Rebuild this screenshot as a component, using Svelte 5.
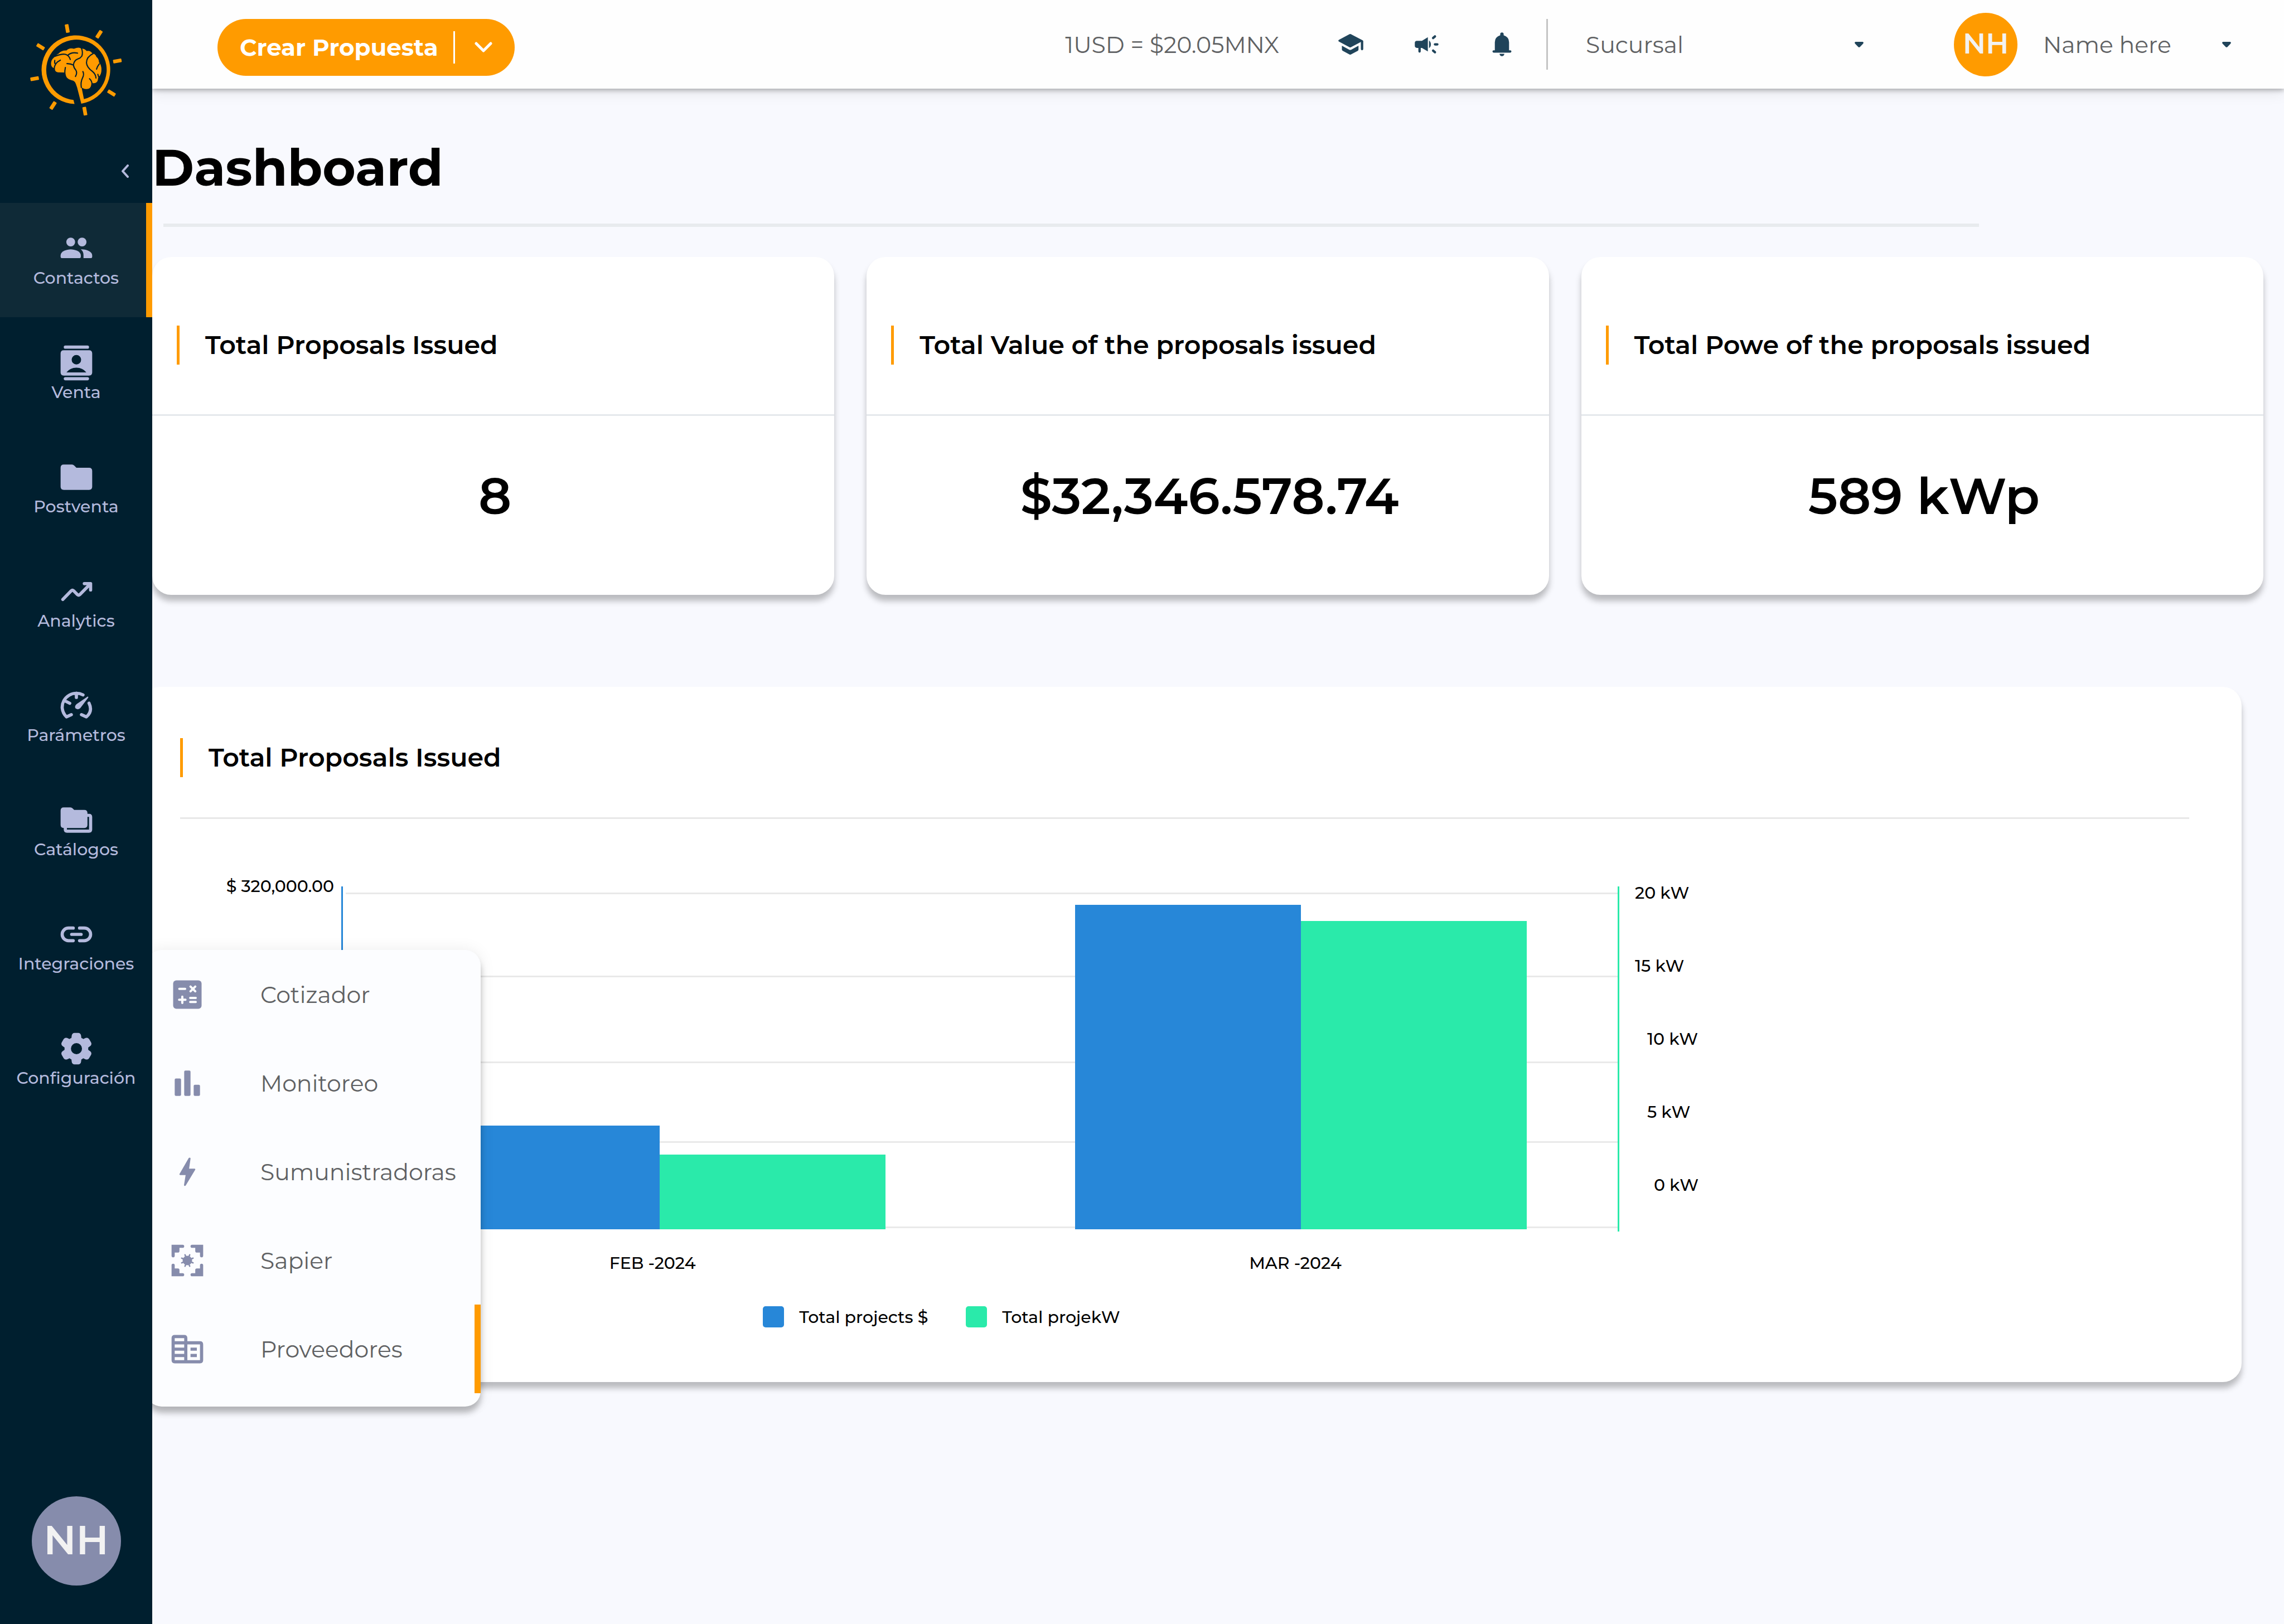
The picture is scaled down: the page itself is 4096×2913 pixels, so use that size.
<script>
  const navItems = [
    { label: "Contactos", icon: "group", active: true },
    { label: "Venta", icon: "contacts" },
    { label: "Postventa", icon: "folder" },
    { label: "Analytics", icon: "trend" },
    { label: "Parámetros", icon: "speed" },
    { label: "Catálogos", icon: "folders" },
    { label: "Integraciones", icon: "link" },
    { label: "Configuración", icon: "settings" },
  ];

  const submenu = [
    { label: "Cotizador", icon: "calculator" },
    { label: "Monitoreo", icon: "bars" },
    { label: "Sumunistradoras", icon: "bolt" },
    { label: "Sapier", icon: "focus" },
    { label: "Proveedores", icon: "building", active: true },
  ];

  const stats = [
    { title: "Total Proposals Issued", value: "8" },
    { title: "Total Value of the proposals issued", value: "$32,346.578.74" },
    { title: "Total Powe of the proposals issued", value: "589 kWp" },
  ];

  // plot geometry, in viewBox units
  const baseline = 615;
  const gridLines = [11, 160, 314, 457, 610];
  const bars = [
    { x: 166, height: 186, series: "money" },
    { x: 571, height: 134, series: "power" },
    { x: 1316, height: 582, series: "money" },
    { x: 1721, height: 553, series: "power" },
  ];
  const powerTicks = [
    { label: "20 kW", level: 0 },
    { label: "15 kW", level: 0 },
    { label: "10 kW", level: 1 },
    { label: "5 kW", level: 1 },
    { label: "0 kW", level: 2 },
  ];

  const rays = [
    [510, 216, -10],
    [750, 260, 33],
    [888, 461, 80],
    [844, 703, -58],
    [643, 840, -10],
    [403, 797, 33],
    [264, 595, 80],
    [309, 354, -58],
  ];

  let branch = "Sucursal";
</script>

{#snippet icon(name)}
  <svg class="icon" viewBox="0 0 24 24" aria-hidden="true">
    {#if name === "group"}
      <circle cx="8.4" cy="7.8" r="2.8" />
      <circle cx="15.6" cy="7.8" r="2.8" />
      <path d="M2 16.2C2 13.6 6 12.4 8.4 12.4S14.8 13.6 14.8 16.2V17.2q0 .8-.8.8H2.8Q2 18 2 17.2Z" />
      <path d="M14.8 12.45C18 12.2 22 13.7 22 16.2V17.2q0 .8-.8.8H16.5V16C16.5 14.5 15.9 13.3 14.8 12.45Z" />
    {:else if name === "contacts"}
      <rect x="4" y="1" width="16" height="2" rx="1" />
      <rect x="4" y="21" width="16" height="2" rx="1" />
      <path
        fill-rule="evenodd"
        d="M4 4H20q2 0 2 2V18q0 2-2 2H4q-2 0-2-2V6q0-2 2-2ZM12 7a3 3 0 0 0 0 6 3 3 0 0 0 0-6ZM5.7 18H18.3Q16 15 12 15T5.7 18Z"
      />
    {:else if name === "folder"}
      <path d="M4 20q-2 0-2-2V6q0-2 2-2h5.2q.8 0 1.4.6L12 6h8q2 0 2 2v10q0 2-2 2z" />
    {:else if name === "trend"}
      <path class="line" d="M3.4 17L8.8 11.5q.7-.6 1.4 0L12.7 14q.7.6 1.4 0L20.6 7.4M17 7H21V11" />
    {:else if name === "speed"}
      <path class="line" d="M16.2 5.1A9 9 0 0 0 3 13Q3.2 16.5 5.7 19L8.8 17.6M20 10.3Q22.5 15.5 18.3 19L15.2 17.6M12 4V6.7M5 9L7.8 10.4" />
      <path d="M19.2 6.1q.6.4.2.9L14.6 13.3q-1.3 1.5-3.1.4-1-1.5.6-2.8z" />
    {:else if name === "folders"}
      <path d="M4 17q-2 0-2-2V6q0-2 2-2h4.2q.8 0 1.4.6l1 1H17q2 0 2 2V15q0 2-2 2z" />
      <path d="M4 16V18q0 2 2 2H20q2 0 2-2V10q0-2-2-2H18V10h2v8H6V16z" />
    {:else if name === "link"}
      <path class="line" d="M10 8H7a4 4 0 0 0 0 8h3M14 8h3a4 4 0 0 1 0 8h-3M9 12h6" />
    {:else if name === "settings"}
      <path
        d="M10.825 22q-.675 0-1.162-.45t-.588-1.1L8.85 18.8q-.325-.125-.612-.3t-.563-.375l-1.55.65q-.625.275-1.25.05t-.975-.8l-1.175-2.05q-.35-.575-.2-1.225t.675-1.075l1.325-1Q4.5 12.5 4.5 12.337v-.675q0-.162.025-.337l-1.325-1Q2.675 9.9 2.525 9.25t.2-1.225L3.9 5.975q.35-.575.975-.8t1.25.05l1.55.65q.275-.2.575-.375t.6-.3l.225-1.65q.1-.65.588-1.1T10.825 2h2.35q.675 0 1.163.45t.587 1.1l.225 1.65q.325.125.613.3t.562.375l1.55-.65q.625-.275 1.25-.05t.975.8l1.175 2.05q.35.575.2 1.225t-.675 1.075l-1.325 1q.025.175.025.338v.674q0 .163-.05.338l1.325 1q.525.425.675 1.075t-.2 1.225l-1.2 2.05q-.35.575-.975.8t-1.25-.05l-1.5-.65q-.275.2-.575.375t-.6.3l-.225 1.65q-.1.65-.587 1.1t-1.163.45zm1.225-6.5q1.45 0 2.475-1.025T15.55 12t-1.025-2.475T12.05 8.5q-1.475 0-2.488 1.025T8.55 12t1.013 2.475T12.05 15.5"
      />
    {:else if name === "calculator"}
      <rect x="3" y="3" width="18" height="18" rx="2" />
      <path class="cut" d="M6.9 8.4H10.6M14 6.9L17 9.9M17 6.9L14 9.9M8.8 13.3V17.3M6.8 15.3H10.8M13.8 14.1H17.3M13.8 16.7H17.3" />
    {:else if name === "bars"}
      <rect x="4" y="9" width="4" height="11" rx="0.8" />
      <rect x="10" y="4" width="4" height="16" rx="0.8" />
      <rect x="16" y="13" width="4" height="7" rx="0.8" />
    {:else if name === "bolt"}
      <path d="M12.9 3.2q.4-.4.9-.1.3.2.2.6L13.1 10H16.5q.9.2.3.9L11 20.6q-.4.5-.9.2-.3-.2-.2-.6L10.9 14H7.5q-.9-.2-.3-.9z" />
    {:else if name === "focus"}
      {#each [0, 90, 180, 270] as angle}
        <path transform="rotate({angle} 12 12)" d="M2 2H9a1 1 0 0 1 0 2H7V6a1 1 0 0 1-1 1H4V9a1 1 0 0 1-2 0Z" />
      {/each}
      <circle cx="12" cy="12" r="3" />
      {#each [22.5, 67.5, 112.5, 157.5] as angle}
        <path class="spoke" transform="rotate({angle} 12 12)" d="M12 8.1V15.9" />
      {/each}
    {:else if name === "building"}
      <path
        fill-rule="evenodd"
        d="M4 3h6q2 0 2 2v2h8q2 0 2 2v10q0 2-2 2H4q-2 0-2-2V5q0-2 2-2zM4 5v2h6V5zM4 9v2h6V9zM4 13v2h6v-2zM4 17v2h6v-2zM12 9v10h8V9zM14 11h4v2h-4zM14 15h4v2h-4z"
      />
    {/if}
  </svg>
{/snippet}

{#snippet caret()}
  <svg class="caret" viewBox="0 0 16 10" aria-hidden="true">
    <path d="M1.500 0h13q2.500 1 .5 3.500L9.500 9.200q-1.500 1.300-3 0L1 3.500Q-1 1 1.500 0z" />
  </svg>
{/snippet}

<div class="shell">
  <aside>
    <div class="brand">
      <svg class="logo" viewBox="230 182 694 694" role="img" aria-label="Logo">
        {#each rays as [x, y, angle]}
          <rect x={x - 14} y={y - 32} width="28" height="64" rx="5" transform="rotate({angle} {x} {y})" />
        {/each}
        <path d="M565 786A259 259 0 1 1 616 783L583 655L570 620L600 600L614 640L636 749A228 228 0 1 0 557 755Z" />
        <path
          d="M424 421Q435 410 446 405Q465 380 505 382Q525 360 560 369Q600 353 616 368Q640 366 657 386Q682 380 699 403Q722 408 730 430Q750 445 749 470Q770 495 768 530Q768 560 750 580Q742 585 741 605Q735 632 702 629Q690 628 691 640Q688 672 655 673Q625 672 616 655L583 655Q575 610 540 606Q505 598 498 565Q496 548 484 548L440 547Q416 545 417 520L408 514Q386 505 388 475Q390 445 424 425Z"
        />
        <path
          class="groove"
          d="M420 425Q470 405 497 411Q525 420 533 450M518 415Q545 392 588 402M618 366Q630 400 620 425Q610 440 590 446Q560 458 557 490M508 481Q535 480 557 492Q560 515 575 530Q588 550 572 578M496 510Q490 535 492 565M458 455Q415 475 412 518M416 457Q413 470 418 482M706 405Q655 430 655 475Q658 510 700 540Q725 560 727 590M752 483Q735 505 731 523M741 562Q743 575 752 587M628 541Q640 560 625 590Q610 620 616 660M678 595Q695 610 697 634"
        />
      </svg>
      <button class="collapse" aria-label="Collapse menu">
        <svg viewBox="0 0 14 24" aria-hidden="true"><path d="M12 2L3 12L12 22" /></svg>
      </button>
    </div>

    <nav>
      {#each navItems as item}
        <a href="#{item.icon}" class:active={item.active}>
          {@render icon(item.icon)}
          <span>{item.label}</span>
        </a>
      {/each}
    </nav>

    <div class="avatar big">NH</div>
  </aside>

  <div class="submenu">
    {#each submenu as item}
      <a href="#{item.icon}" class:active={item.active}>
        {@render icon(item.icon)}
        <span>{item.label}</span>
      </a>
    {/each}
  </div>

  <div class="page">
    <header>
      <button class="create">
        <span>Crear Propuesta</span>
        <i></i>
        <svg viewBox="0 0 32 20" aria-hidden="true"><path d="M3 3L16 16L29 3" /></svg>
      </button>

      <span class="rate">1USD = $20.05MNX</span>

      <div class="tools">
        <button aria-label="Courses">
          <svg viewBox="93 168 216 216" aria-hidden="true">
            <path d="M187 198.500Q192 196 197 198.500L286 245Q291 248 291 252V312Q291 321 282 321T273 312V258L197 298.500Q192 301 187 298.500L106 255Q98 248.500 106 242Z" />
            <path d="M129 287L183 316Q192 321 201 316L255 287V316Q255 322 249 326L197 353Q192 356 187 353L136 326Q129 322 129 316Z" />
          </svg>
        </button>
        <button aria-label="News">
          <svg viewBox="660 168 216 216" aria-hidden="true">
            <path d="M694 249H732L777 222V330L732 303H723V330a9 9 0 0 1-18 0V303H694Q678 303 678 287V265Q678 249 694 249Z" />
            <path d="M786 246Q800 258 800 276T786 306Z" />
            <path class="burst" d="M831 276H849M817 228L831 216M817 324L831 336" />
          </svg>
        </button>
        <button aria-label="Notifications">
          <svg viewBox="1236 168 216 216" aria-hidden="true">
            <path d="M1331 207V199a13 13 0 0 1 26 0v8Q1398 220 1398 260V321H1407a9 9 0 0 1 0 18H1281a9 9 0 0 1 0-18H1290V260Q1290 220 1331 207Z" />
            <path d="M1326 348h36a18 18 0 0 1-36 0Z" />
          </svg>
        </button>
      </div>

      <div class="branch">
        <select aria-label="Sucursal" bind:value={branch}>
          <option>Sucursal</option>
        </select>
        {@render caret()}
      </div>

      <div class="avatar">NH</div>
      <button class="user">
        <span>Name here</span>
        {@render caret()}
      </button>
    </header>

    <main>
      <h1>Dashboard</h1>
      <hr />

      <div class="stats">
        {#each stats as stat}
          <section class="card">
            <h2>{stat.title}</h2>
            <p>{stat.value}</p>
          </section>
        {/each}
      </div>

      <section class="card chart">
        <h2>Total Proposals Issued</h2>
        <div class="plot">
          <span class="money-tick">$ 320,000.00</span>
          <svg viewBox="0 0 2292 619" preserveAspectRatio="none" role="img" aria-label="Projects per month">
            {#each gridLines as y}
              <rect class="grid-line" x="8" {y} width="2281" height="3" />
            {/each}
            {#each bars as bar}
              <rect class={bar.series} x={bar.x} y={baseline - bar.height} width="405" height={bar.height} />
            {/each}
            <rect class="money" x="0" y="0" width="3" height="619" />
            <rect class="power" x="2289" y="0" width="3" height="619" />
          </svg>
          <ul class="power-ticks">
            {#each powerTicks as tick}
              <li class="level-{tick.level}">{tick.label}</li>
            {/each}
          </ul>
          <div class="months">
            <span>FEB -2024</span>
            <span>MAR -2024</span>
          </div>
          <div class="legend">
            <span><i class="money"></i>Total projects $</span>
            <span><i class="power"></i>Total projekW</span>
          </div>
        </div>
      </section>
    </main>
  </div>
</div>

<style>
  :global(body) {
    margin: 0;
    background: #f8f9fe;
  }

  .shell {
    --orange: #ff9b00;
    --navy: #001f2f;
    --blue: #2787d8;
    --green: #2aeaaa;
    position: relative;
    display: flex;
    min-height: 100vh;
    font-family: "Montserrat", "Inter", sans-serif;
    color: #000;
  }

  button,
  select {
    padding: 0;
    border: 0;
    background: none;
    font: inherit;
    color: inherit;
    cursor: pointer;
  }

  a {
    color: inherit;
    text-decoration: none;
  }

  svg {
    display: block;
    fill: currentColor;
  }

  .icon {
    width: 68px;
    height: 68px;
    flex: none;
  }

  .line {
    fill: none;
    stroke: currentColor;
    stroke-width: 2;
    stroke-linecap: round;
    stroke-linejoin: round;
  }

  .cut {
    fill: none;
    stroke: #fcfdff;
    stroke-width: 1.4;
    stroke-linecap: round;
  }

  .spoke {
    stroke: currentColor;
    stroke-width: 0.9;
    stroke-linecap: round;
  }

  /* sidebar */
  aside {
    position: relative;
    z-index: 3;
    display: flex;
    flex-direction: column;
    align-items: center;
    flex: none;
    width: 273px;
    box-sizing: border-box;
    padding-bottom: 69px;
    background: var(--navy);
    color: #b4badd;
  }

  .brand {
    display: flex;
    flex-direction: column;
    align-items: center;
    justify-content: space-between;
    width: 100%;
    height: 364px;
    box-sizing: border-box;
    padding: 43px 0 45px;
  }

  .logo {
    width: 165px;
    height: 165px;
    color: var(--orange);
  }

  .groove {
    fill: none;
    stroke: var(--navy);
    stroke-width: 9;
    stroke-linecap: round;
  }

  .collapse {
    align-self: flex-end;
    margin-right: 42px;
  }

  .collapse svg {
    width: 14px;
    height: 24px;
    fill: none;
    stroke: currentColor;
    stroke-width: 4;
    stroke-linecap: round;
    stroke-linejoin: round;
  }

  nav {
    width: 100%;
    margin-bottom: auto;
  }

  nav a {
    display: flex;
    flex-direction: column;
    align-items: center;
    height: 205px;
    box-sizing: border-box;
    padding-top: 48px;
    font-size: 30px;
    font-weight: 500;
    line-height: 37px;
  }

  nav a.active {
    background: linear-gradient(to left, var(--orange) 11px, #0f2a37 11px);
  }

  .avatar {
    display: flex;
    align-items: center;
    justify-content: center;
    flex: none;
    width: 114px;
    height: 114px;
    box-sizing: border-box;
    padding-bottom: 4px;
    border-radius: 50%;
    background: var(--orange);
    color: #f2f2f2;
    font-size: 51px;
    font-weight: 600;
  }

  .avatar.big {
    width: 160px;
    height: 160px;
    background: #868cac;
    font-size: 72px;
  }

  /* floating submenu */
  .submenu {
    position: absolute;
    top: 1704px;
    left: 262px;
    z-index: 2;
    width: 600px;
    box-sizing: border-box;
    padding-bottom: 24px;
    border-radius: 28px;
    background: #fcfdff;
    box-shadow:
      0 11px 11px rgba(0, 0, 0, 0.25),
      0 0 28px rgba(0, 0, 0, 0.08);
    color: #868cac;
  }

  .submenu a {
    display: flex;
    align-items: center;
    gap: 97px;
    height: 159px;
    padding-left: 40px;
  }

  .submenu a.active {
    background: linear-gradient(to left, var(--orange) 11px, transparent 11px);
  }

  .submenu span {
    color: #5f6163;
    font-size: 41px;
  }

  /* top bar */
  .page {
    flex: 1;
    min-width: 0;
  }

  header {
    position: relative;
    z-index: 1;
    display: flex;
    align-items: center;
    height: 159px;
    box-sizing: border-box;
    padding: 0 95px 0 117px;
    background: #fefefe;
    box-shadow:
      0 3px 8px rgba(0, 0, 0, 0.28),
      0 8px 24px rgba(0, 0, 0, 0.08);
    color: #5f6163;
    font-size: 41px;
  }

  header svg {
    color: #20445a;
  }

  .create {
    display: flex;
    align-items: center;
    gap: 27px;
    height: 102px;
    box-sizing: border-box;
    margin: 11px auto 0 0;
    padding: 0 40px;
    border-radius: 51px;
    background: var(--orange);
    color: #fff;
    font-size: 42px;
    font-weight: 700;
  }

  .create i {
    width: 3px;
    height: 58px;
    background: #fff;
  }

  .create svg {
    width: 32px;
    height: 20px;
    margin-left: 8px;
    fill: none;
    stroke: #fff;
    stroke-width: 5;
    stroke-linecap: round;
    stroke-linejoin: round;
  }

  .tools {
    display: flex;
    gap: 84px;
    margin: 0 54px 0 104px;
  }

  .tools svg {
    width: 51px;
    height: 51px;
  }

  .burst {
    stroke: currentColor;
    stroke-width: 18;
    stroke-linecap: round;
  }

  .branch {
    display: flex;
    align-items: center;
    width: 569px;
    height: 91px;
    box-sizing: border-box;
    margin-right: 162px;
    padding-left: 68px;
    border-left: 3px solid #c4c4c4;
  }

  .branch select {
    flex: 1;
    appearance: none;
    outline: none;
  }

  .caret {
    width: 16px;
    height: 10px;
    flex: none;
    pointer-events: none;
  }

  .user {
    display: flex;
    align-items: center;
    justify-content: space-between;
    width: 337px;
    margin-left: 46px;
  }

  /* content */
  main {
    padding: 86px 37px 0 0;
  }

  h1 {
    margin: 0;
    font-size: 91px;
    font-weight: 700;
    line-height: 111px;
  }

  hr {
    width: 86%;
    height: 6px;
    margin: 45px 0 54px 20px;
    border: 0;
    background: #e8ebee;
  }

  .stats {
    display: grid;
    grid-template-columns: repeat(3, 1fr);
    gap: 58px;
  }

  .card {
    border-radius: 34px;
    background: #fff;
    box-shadow: 0 11px 11px rgba(0, 0, 0, 0.25);
  }

  .card h2 {
    display: flex;
    align-items: center;
    gap: 46px;
    margin: 0;
    padding: 123px 44px 89px;
    border-bottom: 3px solid #e5e9ec;
    font-size: 46px;
    font-weight: 600;
    line-height: 56px;
  }

  .card h2::before {
    content: "";
    width: 5px;
    height: 70px;
    background: var(--orange);
  }

  .card p {
    margin: 0;
    padding: 88px 0 122px 6px;
    font-size: 91px;
    font-weight: 600;
    line-height: 111px;
    text-align: center;
  }

  /* the card runs in under the sidebar */
  .card.chart {
    margin: 165px 39px 0 -20px;
    padding: 92px 94px 98px 70px;
  }

  .chart h2 {
    padding: 0 0 72px;
    border-bottom-color: #e8e8e8;
  }

  .plot {
    display: grid;
    grid-template-columns: 289px 2292fr 1022fr;
    margin-top: 102px;
    font-size: 30px;
    font-weight: 500;
    line-height: 37px;
  }

  .plot svg {
    width: 100%;
    height: 619px;
    margin-top: 19px;
  }

  .money-tick {
    padding-right: 13px;
    text-align: right;
  }

  .grid-line {
    fill: #e9e9e9;
  }

  .money {
    fill: var(--blue);
    background: var(--blue);
  }

  .power {
    fill: var(--green);
    background: var(--green);
  }

  .power-ticks {
    display: flex;
    flex-direction: column;
    gap: 94px;
    margin: 0;
    padding: 12px 0 0 28px;
    list-style: none;
  }

  .level-1 {
    padding-left: 22px;
  }

  .level-2 {
    padding-left: 34px;
  }

  .months {
    grid-column: 2;
    display: grid;
    grid-template-columns: 48.7% 51.9%;
    margin-top: 38px;
    text-align: center;
  }

  .legend {
    grid-column: 2;
    display: flex;
    gap: 68px;
    margin: 59px 0 0 33%;
  }

  .legend span {
    display: flex;
    align-items: center;
    gap: 27px;
  }

  .legend i {
    width: 38px;
    height: 38px;
    border-radius: 5px;
  }
</style>
